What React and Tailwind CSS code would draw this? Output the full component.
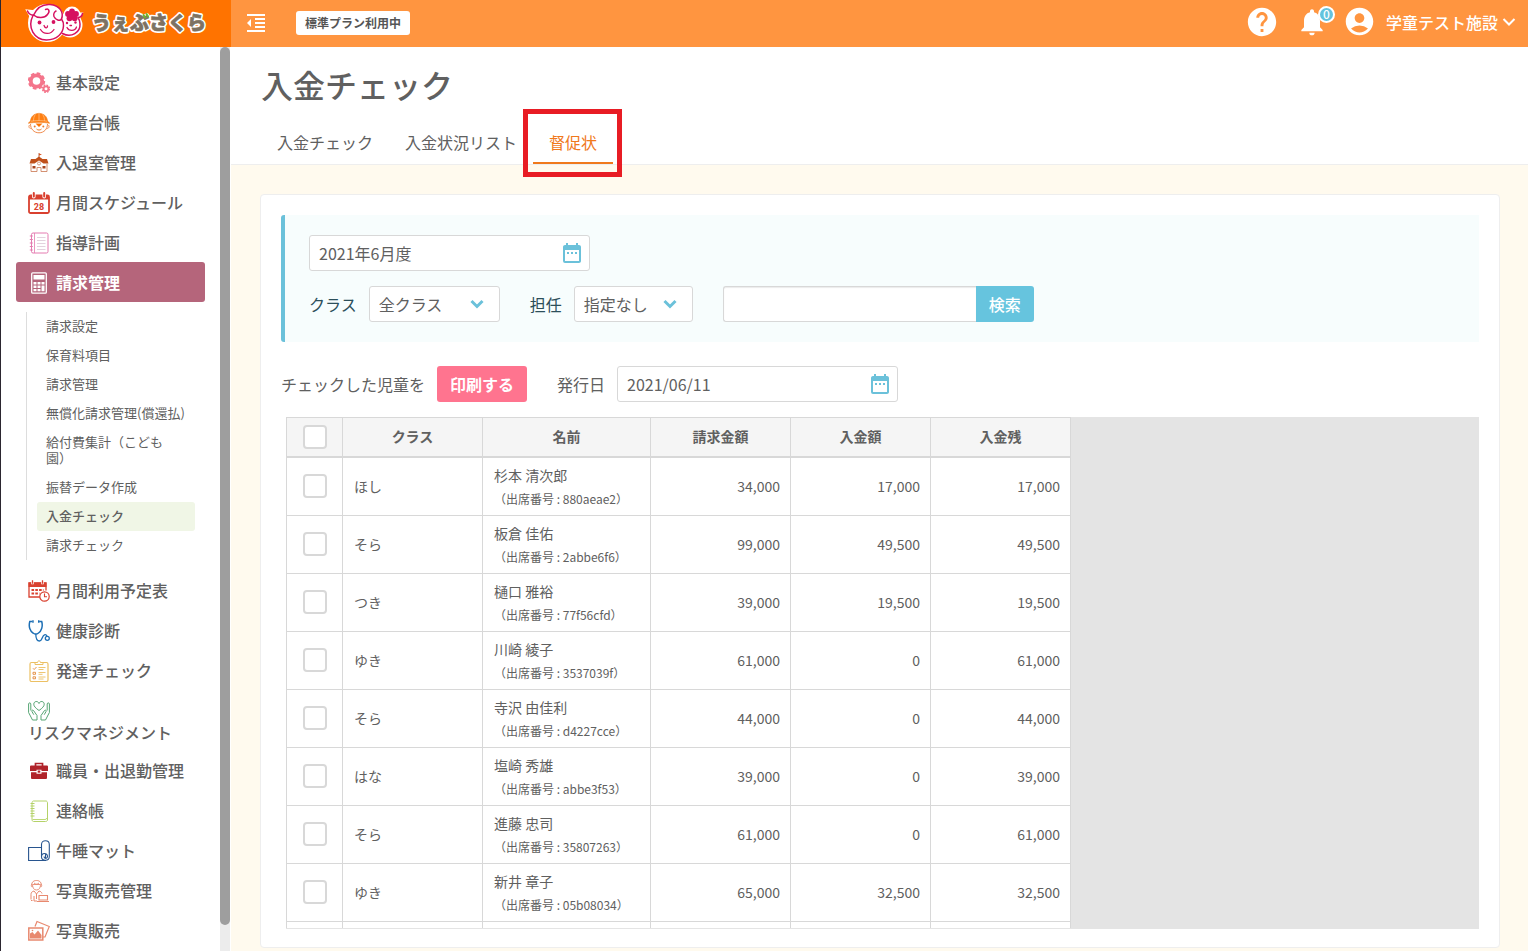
import React from 'react';
import {
  MdAccountCircle,
  MdDateRange,
  MdFormatIndentDecrease,
  MdHelp,
  MdNotifications,
} from 'react-icons/md';

const Icon = ({ children, className = '' }) => (
  <svg
    viewBox="0 0 22 22"
    fill="none"
    stroke="currentColor"
    aria-hidden="true"
    className={`mt-0.5 w-[22px] h-[22px] shrink-0 ${className}`}
  >
    {children}
  </svg>
);

const GearsIcon = () => (
  <Icon className="text-[#f4758b]">
    <circle cx="8.500" cy="9" r="5.700" strokeWidth="3.800" />
    <circle cx="8.500" cy="9" r="7.700" strokeWidth="2" strokeDasharray="3.600 2.448" />
    <circle cx="18" cy="16.700" r="2.400" strokeWidth="1.800" />
    <circle cx="18" cy="16.700" r="3.600" strokeWidth="1.400" strokeDasharray="1.700 1.127" />
  </Icon>
);

const ChildIcon = () => (
  <Icon>
    <path d="M2.500 12C2.500 17 6 20.800 11 20.800S19.500 17 19.500 12" stroke="#f08a4b" />
    <path d="M7.500 11.500h7L11 15z" fill="#ff7300" stroke="none" />
    <path d="M2.500 9C3 4 6.500 1.500 11 1.500S19 4 19.500 9l2.200 2.300c-6-1.300-15.400-1.300-21.400 0z" fill="#ff7f11" stroke="#ee7410" strokeWidth=".6" />
    <path d="M11 .5v8.500M7.500 2.500C6 4 5.500 6.500 5.500 9M14.500 2.500C16 4 16.500 6.500 16.500 9M3 9.200c5-.8 11-.8 16 0" stroke="#ffc48f" strokeWidth=".7" />
    <path d="M1.500 13c-1.300 1.500-.3 3.500 1.300 3.500M20.500 13c1.300 1.500 .3 3.500-1.300 3.500" stroke="#f08a4b" strokeWidth=".9" />
    <circle cx="6.700" cy="14.500" r="1" fill="#e87b30" stroke="none" />
    <circle cx="15.300" cy="14.500" r="1" fill="#e87b30" stroke="none" />
    <path d="M8.500 17c1.500 1.400 3.500 1.400 5 0" stroke="#e87b30" />
  </Icon>
);

const SchoolIcon = () => (
  <Icon>
    <path d="M11 1v5" stroke="#a8451e" strokeWidth=".8" />
    <path d="M11 1.500l3 1-3 1z" fill="#d9531e" stroke="none" />
    <path d="M11 4.500l3.500 2.500H19l1.500 4.500h-5L11 8.500l-4.500 3h-5L3 7h4.500z" fill="#c0501a" stroke="none" />
    <path d="M3 12v7.500h6v-4h4v4h6V12" stroke="#cf8462" strokeWidth=".9" />
    <circle cx="11" cy="11.500" r="1.500" stroke="#cf8462" strokeWidth=".8" />
    <path d="M4.500 14h3v2.500h-3zM14.500 14h3v2.500h-3z" fill="#a8451e" stroke="none" />
  </Icon>
);

const CalendarIcon = () => (
  <Icon>
    <rect x="1" y="3.500" width="20" height="17.500" rx="1.500" stroke="#d9402f" strokeWidth="1.800" />
    <path d="M1 3.200h20v4.300H1z" fill="#d9402f" stroke="none" />
    <path d="M5.800 1v3.800M16.200 1v3.800" stroke="#fff" strokeWidth="3.600" strokeLinecap="round" />
    <path d="M5.800 1v3.400M16.200 1v3.400" stroke="#d9402f" strokeWidth="2" strokeLinecap="round" />
    <text x="11" y="17.500" textAnchor="middle" fontSize="9" fontWeight="700" fontFamily="Roboto, sans-serif" fill="#d9402f" stroke="none">28</text>
  </Icon>
);

const PlanIcon = () => (
  <Icon className="text-[#e47bb0]">
    <rect x="3.500" y="1" width="16.500" height="20" rx="1.500" />
    <path d="M6.500 1v20" strokeWidth=".8" />
    <path d="M1.800 4h3M1.800 7.500h3M1.800 11h3M1.800 14.500h3M1.800 18h3" strokeWidth="1.200" />
    <path d="M9 5.500h8.500M9 8.500h8.500M9 11.500h8.500M9 14.500h8.500M9 17.500h8.500" stroke="#dcc6d6" strokeWidth=".8" />
  </Icon>
);

const CalculatorIcon = () => (
  <Icon className="text-white">
    <rect x="3.700" y=".8" width="14.600" height="20.400" rx="1" strokeWidth="1.300" />
    <rect x="6" y="3.500" width="10" height="3.500" strokeWidth="1" fill="#fff" />
    <path d="M5.500 10h3v2.500h-3zM9.500 10h3v2.500h-3zM13.500 10h3v2.500h-3zM5.500 13.500h3V16h-3zM9.500 13.500h3V16h-3zM13.500 13.500h3v5.700h-3zM5.500 17h3v2.200h-3zM9.500 17h3v2.200h-3z" fill="#fff" stroke="none" />
  </Icon>
);

const MonthlyIcon = () => (
  <Icon className="text-[#d9402f]">
    <path d="M12 17H1V3h17v7.500" strokeWidth="1.300" />
    <path d="M.5 2.500h18V7H.5z" fill="currentColor" stroke="none" />
    <path d="M4.500 .3v4M14.500 .3v4" stroke="#fff" strokeWidth="2.600" />
    <path d="M4.500 .3v3.500M14.500 .3v3.500" strokeWidth="1.300" />
    <path d="M3.500 10h12M3.500 13.500h8" strokeWidth="2.200" strokeDasharray="2.600 1.200" />
    <circle cx="16.500" cy="16.500" r="4.700" fill="#fff" strokeWidth="1.200" />
    <path d="M16.500 13.500v3.300h2.500" strokeWidth="1.100" />
  </Icon>
);

const StethoscopeIcon = () => (
  <Icon className="text-[#1d6fb5]">
    <path d="M4.500 1.500H1.800C.2 7 2.500 11.500 5 13c1.700 1.200 4 1.200 5.500 0 2.700-1.800 4.700-6.500 3.200-11.500h-2.500" strokeWidth="1.500" />
    <path d="M5 .3v2.500M10.700 .3v2.500" strokeWidth="1.400" />
    <path d="M7.800 14c0 4 .7 7 3.700 7s2.500-5.500 5-6.200c1.500-.4 2.200.7 2.500 1.500" strokeWidth="1.300" />
    <circle cx="19.300" cy="18.300" r="2" strokeWidth="1.300" />
  </Icon>
);

const ChecklistIcon = () => (
  <Icon className="text-[#ecc063]">
    <rect x="2" y="2.500" width="18" height="19" rx="1.500" strokeWidth="1.200" />
    <path d="M7 4.500V2.500h2.500C10 .2 12 .2 12.500 2.500H15v2z" fill="#fff" strokeWidth="1" />
    <path d="M10.500 7.500h7M10.500 9.500h5M10.500 12.500h7M10.500 14.300h4M10.500 17h7M10.500 19h5" strokeWidth=".9" />
    <path d="M5 8.300l1.200 1.200L8.500 7" stroke="#e28b3c" strokeWidth=".9" />
    <path d="M5 12.300h2.500v2H5zM5 16.800h2.500v2H5z" stroke="#e28b3c" strokeWidth=".9" />
  </Icon>
);

const CareIcon = () => (
  <Icon className="text-[#56a573]">
    <path d="M11 10.500C7.500 8 5.800 6.300 5.800 4.200c0-3.200 4.200-3.700 5.200-.7 1-3 5.200-2.500 5.200.7 0 2.100-1.700 3.800-5.200 6.300z" strokeWidth="1" />
    <path d="M.6 4v8.500L4.500 20h4.500v-4.500L5.500 10.500c-1-1-2.200 0-1.500 1.200l1.800 3M.6 4c0-1.500 2.200-1.500 2.200 0v6.500M21.400 4v8.500L17.500 20H13v-4.500l3.500-5c1-1 2.200 0 1.500 1.200l-1.800 3M21.400 4c0-1.500-2.200-1.500-2.200 0v6.500" strokeWidth="1" />
  </Icon>
);

const BriefcaseIcon = () => (
  <Icon className="text-[#b0232a]">
    <path d="M7.500 6V3.500h7V6" strokeWidth="1.700" />
    <path d="M3 5.500h16a1 1 0 0 1 1 1V11h-6.500v-1.200h-5V11H2V6.500a1 1 0 0 1 1-1zM3 12.200h5.500v1.500h5v-1.500H19v5.800a1 1 0 0 1-1 1H4a1 1 0 0 1-1-1z" fill="currentColor" stroke="none" />
    <path d="M9.700 10.500h2.600v2.200H9.700z" fill="currentColor" stroke="none" />
  </Icon>
);

const NotebookIcon = () => (
  <Icon className="text-[#b4d268]">
    <path d="M4 3c0-1 .5-2 1.500-2H18c1 0 1.500 1 1.500 2v17c0 1-1 1.500-2 1.500H5.500C4.500 21.500 4 20.500 4 19.500z" />
    <path d="M4.500 19.500h12.500c1 0 1.500-.5 2-1.500" strokeWidth=".9" />
    <path d="M2.500 3.500h4M2.500 6h4M2.500 8.500h4M2.500 11h4M2.500 13.500h4M2.500 16h4" strokeWidth="1.200" />
  </Icon>
);

const MatIcon = () => (
  <Icon className="text-[#28558f]">
    <path d="M13.500 7.500H.6v13h17.500" strokeWidth="1.100" />
    <path d="M13.500 17V4.500C13.500-.5 21.300-.5 21.300 4.500v12c0 5-7.800 5-7.800 .5 0-4.500 6-4.500 6-.5 0 2.500-3.500 2.500-3.500 0M17.500 13.500v5" strokeWidth="1.100" />
  </Icon>
);

const PhotoStaffIcon = () => (
  <Icon className="text-[#e8896f]">
    <path d="M4.500 6.500C3.500 7 2.800 6 3.500 5.200 4 1.500 6 .5 8.500 .5s4.500 1 5 4.700c.7.800 0 1.800-1 1.300" />
    <path d="M4.500 4.500h8c0 3.500-1.500 5.500-4 5.500s-4-2-4-5.500zM6 3c1.500 1.500 3.500 1.500 5 0" strokeWidth=".9" />
    <path d="M3 20.500H4.500M3 19.500v-5c0-2 1-3 3-3.500l2.500 3 2.500-3c1.500.3 2.500 1 3 2.500M8.500 14v5M6 16v5h3" strokeWidth="1" />
    <path d="M11 15.500h8.500V20H11zM9 21.500h12" strokeWidth="1.100" />
  </Icon>
);

const PhotosIcon = () => (
  <Icon className="text-[#e8896f]">
    <path d="M7 6.500L9 1.500l12.300 5-4.300 10.500h-2" strokeWidth="1.200" />
    <rect x=".8" y="8" width="14" height="12" fill="#fff" strokeWidth="1.500" />
    <path d="M2 18.500v-5l2.500-1.500 2 2.500L10 10.500l3.500 4.500v3.500z" fill="currentColor" stroke="none" />
    <circle cx="4.500" cy="10.500" r=".8" fill="currentColor" stroke="none" />
  </Icon>
);

const MENU_TOP = [
  { label: '基本設定', icon: GearsIcon },
  { label: '児童台帳', icon: ChildIcon },
  { label: '入退室管理', icon: SchoolIcon },
  { label: '月間スケジュール', icon: CalendarIcon },
  { label: '指導計画', icon: PlanIcon },
  { label: '請求管理', icon: CalculatorIcon, active: true },
];

const SUB_MENU = [
  '請求設定',
  '保育料項目',
  '請求管理',
  '無償化請求管理(償還払)',
  '給付費集計（こども\n園）',
  '振替データ作成',
  '入金チェック',
  '請求チェック',
];

const MENU_BOTTOM = [
  { label: '月間利用予定表', icon: MonthlyIcon },
  { label: '健康診断', icon: StethoscopeIcon },
  { label: '発達チェック', icon: ChecklistIcon },
  { label: 'リスクマネジメント', icon: CareIcon, stacked: true },
  { label: '職員・出退勤管理', icon: BriefcaseIcon },
  { label: '連絡帳', icon: NotebookIcon },
  { label: '午睡マット', icon: MatIcon },
  { label: '写真販売管理', icon: PhotoStaffIcon },
  { label: '写真販売', icon: PhotosIcon },
];

const ROWS = [
  { group: 'ほし', name: '杉本 清次郎', no: '880aeae2', billed: '34,000', paid: '17,000', rest: '17,000' },
  { group: 'そら', name: '板倉 佳佑', no: '2abbe6f6', billed: '99,000', paid: '49,500', rest: '49,500' },
  { group: 'つき', name: '樋口 雅裕', no: '77f56cfd', billed: '39,000', paid: '19,500', rest: '19,500' },
  { group: 'ゆき', name: '川崎 綾子', no: '3537039f', billed: '61,000', paid: '0', rest: '61,000' },
  { group: 'そら', name: '寺沢 由佳利', no: 'd4227cce', billed: '44,000', paid: '0', rest: '44,000' },
  { group: 'はな', name: '塩崎 秀雄', no: 'abbe3f53', billed: '39,000', paid: '0', rest: '39,000' },
  { group: 'そら', name: '進藤 忠司', no: '35807263', billed: '61,000', paid: '0', rest: '61,000' },
  { group: 'ゆき', name: '新井 章子', no: '05b08034', billed: '65,000', paid: '32,500', rest: '32,500' },
];

const Chevron = ({ className }) => (
  <svg viewBox="0 0 14 10" fill="none" stroke="currentColor" aria-hidden="true" className={className}>
    <path d="M1.500 2l5.500 5.500L12.500 2" />
  </svg>
);

function Logo() {
  return (
    <a href="#" aria-label="うぇぶさくら" className="block w-[230px] shrink-0 bg-[#ff7300]">
      <svg viewBox="0 0 230 47" className="block w-[230px] h-[47px]">
        <g fill="#fff" stroke="#fff" strokeWidth="3">
          <circle cx="46" cy="23" r="17.500" />
          <circle cx="69" cy="25" r="11" />
          <circle cx="71" cy="15" r="7" />
          <path d="M27 11l4 7 5-6zM80 14l-3 6-4-6z" />
        </g>
        <g fill="none" stroke="#d6115f" strokeWidth="1.500" strokeLinecap="round">
          <path d="M26.500 11c1 2.500 3 4 6 4.300C36 7.500 42 4 49 4.500c10 .8 14 8 11.500 14.500-1.500 2.500-6 1-7.500-2.500-.7-2 .2-4.500 2-5.500" />
          <path d="M32.500 15c4 3.500 11 3.500 14-.5 3-3.500 1-6.500-2-5" />
          <path d="M32 15.500c-6 12 1 24 13.500 24.500C56 40 62 33.500 62.500 26c.2-3-.5-5-2-7" />
          <path d="M61.500 33.500c9 5 18-1.500 17.500-9.500 0-3-1-5-2-6.500M77 17.500c2.500 0 4-1.500 4.500-4" />
          <path d="M39.500 29.500c3 5 10 5.500 13.500 0M43 25.500c1 3 3.500 3 3.500 .3M66 27.500c2 4 8 4 9.500-.5M69 25.500h1.500" strokeWidth="1.300" />
        </g>
        <g fill="#d6115f">
          <circle cx="38.500" cy="22.500" r="1.900" />
          <circle cx="52.500" cy="22" r="1.900" />
          <circle cx="66" cy="23" r="1.200" />
          <circle cx="74.500" cy="22.500" r="1.200" />
          <circle cx="71" cy="11.300" r="2.900" />
          <circle cx="75" cy="14" r="2.900" />
          <circle cx="73.700" cy="18.300" r="2.900" />
          <circle cx="68.500" cy="18.300" r="2.900" />
          <circle cx="67" cy="14" r="2.900" />
          <circle cx="71" cy="15.500" r="2.500" />
        </g>
        <g fontSize="19" fontWeight="900" strokeLinejoin="round">
          <text x="91" y="30" fill="#fff" stroke="#fff" strokeWidth="4">
            うぇぶさくら
          </text>
          <text x="91" y="30" fill="#7d7262" stroke="#7d7262" strokeWidth=".7" aria-hidden="true">
            うぇぶさくら
          </text>
        </g>
        <path d="M142.500 15l1.500 2.500M145.500 14l1.500 2.500" stroke="#6fb52c" strokeWidth="2" strokeLinecap="round" />
      </svg>
    </a>
  );
}

function Header() {
  return (
    <header className="flex h-[47px] shrink-0 bg-[#ff9540] text-white">
      <Logo />
      <div className="flex flex-1 items-center pl-[13px] pr-3 pb-[2px]">
        <button type="button" aria-label="メニューを閉じる">
          <MdFormatIndentDecrease size={24} />
        </button>
        <span className="ml-7 flex h-6 items-center rounded-[3px] bg-white px-[9px] text-xs font-bold text-[#555]">
          標準プラン利用中
        </span>
        <div className="ml-auto flex items-center pb-[2px]">
          <button type="button" aria-label="ヘルプ">
            <MdHelp size={34} />
          </button>
          <button type="button" aria-label="お知らせ" className="relative ml-[17px]">
            <MdNotifications size={32} />
            <span className="absolute -right-[7px] top-0 flex h-[17px] w-[17px] items-center justify-center rounded-full border-2 border-white bg-[#64c3dd] text-xs leading-none font-medium">
              0
            </span>
          </button>
          <button type="button" className="ml-[15px] flex items-center">
            <MdAccountCircle size={33} />
            <span className="ml-[10px] font-medium">学童テスト施設</span>
            <Chevron className="ml-1 w-[14px] h-[10px] stroke-2" />
          </button>
        </div>
      </div>
    </header>
  );
}

function MenuItem({ label, icon: ItemIcon, active, stacked }) {
  return (
    <li>
      <a
        href="#"
        className={`flex min-h-10 rounded-[3px] pl-3 leading-[21px] ${
          stacked ? 'flex-col pt-2 pb-[7px]' : 'items-center gap-[6px] py-2'
        } ${active ? 'bg-[#b5657b] font-bold text-white' : 'font-medium'}`}
      >
        <ItemIcon />
        <span>{label}</span>
      </a>
    </li>
  );
}

function Sidebar() {
  return (
    <aside className="flex w-[230px] shrink-0 overflow-hidden">
      <nav className="flex-1 px-[15px] pt-[15px]">
        <ul>
          {MENU_TOP.map((item) => (
            <MenuItem key={item.label} {...item} />
          ))}
        </ul>
        <ul className="m-[10px] border-l border-[#ddd] pl-[10px] text-[13px] leading-4">
          {SUB_MENU.map((label) => (
            <li key={label}>
              <a
                href="#"
                className={`block whitespace-pre-line rounded-[3px] pl-[9px] pr-2 pt-[6px] pb-[7px] ${
                  label === '入金チェック' ? 'bg-[#f0f6e6] font-medium' : ''
                }`}
              >
                {label}
              </a>
            </li>
          ))}
        </ul>
        <ul>
          {MENU_BOTTOM.map((item) => (
            <MenuItem key={item.label} {...item} />
          ))}
        </ul>
      </nav>
      <div className="mr-px w-[10px] bg-[#ececec] pb-[26px]">
        <div className="h-full rounded-full bg-[#9e9e9e]" />
      </div>
    </aside>
  );
}

const TABS = ['入金チェック', '入金状況リスト', '督促状'];

function PageHead() {
  return (
    <div className="border-b border-[#eee] pl-[30px] pt-[13px]">
      <h1 className="text-[32px] leading-[48px] font-medium">入金チェック</h1>
      <div className="mt-[13px] flex">
        {TABS.map((tab) => {
          const current = tab === '督促状';
          return (
            <a
              key={tab}
              href="#"
              className={`relative h-[43px] px-4 pt-[9px] leading-6 ${
                current ? 'border-b-2 border-[#f0791c] text-[#f0791c]' : ''
              }`}
            >
              {tab}
              {current && (
                <span className="absolute -left-[10px] -right-[9px] -top-[12px] -bottom-[15px] border-5 border-[#e81c24]" />
              )}
            </a>
          );
        })}
      </div>
    </div>
  );
}

function DateField({ id, value, label }) {
  return (
    <div className="relative w-[281px]">
      <input
        id={id}
        type="text"
        aria-label={label}
        defaultValue={value}
        className="block h-9 w-full rounded-[3px] border border-[#d8d8d8] bg-white pl-[9px] pr-9"
      />
      <MdDateRange size={24} className="pointer-events-none absolute right-[6px] top-[6px] text-[#6bc1da]" />
    </div>
  );
}

function SelectField({ id, value, className }) {
  return (
    <div className={`relative ${className}`}>
      <select
        id={id}
        className="block h-9 w-full appearance-none rounded-[3px] border border-[#d8d8d8] bg-white pl-[9px] pr-8"
      >
        <option>{value}</option>
      </select>
      <Chevron className="pointer-events-none absolute right-4 top-[13px] w-[14px] h-[10px] stroke-3 text-[#6bc1da]" />
    </div>
  );
}

function Filters() {
  return (
    <div className="rounded-l-[3px] border-l-4 border-[#6bc1da] bg-[#f7fdfd] py-5 pl-6">
      <DateField id="month" label="対象月" value="2021年6月度" />
      <div className="mt-[15px] flex items-center">
        <label htmlFor="class" className="text-[#2c4f5a]">クラス</label>
        <SelectField id="class" value="全クラス" className="ml-3 w-[131px]" />
        <label htmlFor="teacher" className="ml-[30px] text-[#2c4f5a]">担任</label>
        <SelectField id="teacher" value="指定なし" className="ml-3 w-[119px]" />
        <input
          type="text"
          aria-label="検索キーワード"
          className="ml-[30px] h-9 w-[253px] rounded-l-[3px] border border-r-0 border-[#d8d8d8] bg-white px-2 shadow-[inset_0_1px_1px_rgba(0,0,0,0.08)]"
        />
        <button type="button" className="h-9 w-[58px] rounded-r-[3px] bg-[#66c4de] font-medium text-white">
          検索
        </button>
      </div>
    </div>
  );
}

const Checkbox = ({ label }) => (
  <input
    type="checkbox"
    aria-label={label}
    className="mx-auto block h-6 w-6 appearance-none rounded border-2 border-[#d8d8d8] bg-white"
  />
);

function DunningTable() {
  return (
    <div className="ml-[5px] mt-[15px] min-h-0 flex-1 overflow-hidden border-b border-[#e4e4e4] bg-[#e4e4e4]">
      <table className="w-[785px] table-fixed border-separate border-spacing-0 border-l border-t border-[#d8d8d8] bg-white text-sm [&_td]:border-r [&_td]:border-b [&_td]:border-[#d8d8d8] [&_th]:h-10 [&_th]:border-r [&_th]:border-b-2 [&_th]:border-[#d8d8d8] [&_th]:bg-[#f5f5f5] [&_th+th]:pb-0.5">
        <colgroup>
          <col className="w-14" />
          <col className="w-[140px]" />
          <col className="w-[168px]" />
          <col className="w-[140px]" />
          <col className="w-[140px]" />
          <col className="w-[140px]" />
        </colgroup>
        <thead>
          <tr>
            <th><Checkbox label="すべて選択" /></th>
            <th>クラス</th>
            <th>名前</th>
            <th>請求金額</th>
            <th>入金額</th>
            <th>入金残</th>
          </tr>
        </thead>
        <tbody>
          {ROWS.map((row) => (
            <tr key={row.no} className="h-[58px]">
              <td className="pb-0.5"><Checkbox label={row.name} /></td>
              <td className="px-[11px] pb-0.5">{row.group}</td>
              <td className="px-[11px]">
                <div className="leading-6">{row.name}</div>
                <div className="text-xs leading-6">（出席番号 : {row.no}）</div>
              </td>
              <td className="px-[10px] pb-0.5 text-right">{row.billed}</td>
              <td className="px-[10px] pb-0.5 text-right">{row.paid}</td>
              <td className="px-[10px] pb-0.5 text-right">{row.rest}</td>
            </tr>
          ))}
          <tr className="h-[58px]">
            <td /><td /><td /><td /><td /><td />
          </tr>
        </tbody>
      </table>
    </div>
  );
}

export default function App() {
  return (
    <div className="flex h-screen flex-col overflow-hidden border-l border-[#2b2630] bg-white font-['Noto_Sans_CJK_JP',sans-serif] text-base text-[#606060]">
      <Header />
      <div className="flex min-h-0 flex-1">
        <Sidebar />
        <main className="flex min-w-0 flex-1 flex-col">
          <PageHead />
          <div className="flex min-h-0 flex-1 flex-col bg-[#fffaee] pl-[29px] pr-7 pt-[29px] pb-[3px]">
            <section className="flex min-h-0 flex-1 flex-col rounded border border-[#eee] bg-white px-5 pt-5 pb-[18px]">
              <Filters />
              <div className="mt-6 flex items-center">
                <span>チェックした児童を</span>
                <button type="button" className="ml-3 h-9 w-[90px] rounded-[3px] bg-[#ff748f] font-bold text-white">
                  印刷する
                </button>
                <label htmlFor="issued" className="ml-[30px] mr-3">発行日</label>
                <DateField id="issued" value="2021/06/11" />
              </div>
              <DunningTable />
            </section>
          </div>
        </main>
      </div>
    </div>
  );
}
